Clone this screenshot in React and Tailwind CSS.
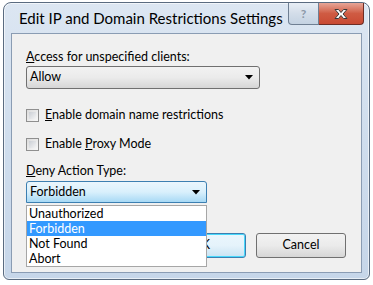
import React from "react";

const font = { fontFamily: 'Lato, "Noto Sans", sans-serif' };

function Checkbox({ children }) {
  return (
    <div className="flex items-center gap-[6px] h-[13px]">
      <div className="w-[13px] h-[13px] border border-[#8f8f8f] bg-gradient-to-br from-[#dcdcdc] to-[#f8f8f8] p-[2px]">
        <div className="w-full h-full bg-gradient-to-br from-[#cbcfd5] to-[#f4f4f4]" />
      </div>
      <span className="text-[12.5px] leading-none text-black">{children}</span>
    </div>
  );
}

function Arrow() {
  return (
    <svg width="8" height="5" viewBox="0 0 8 5" className="mr-[6px]">
      <path d="M0 0h8L4 4.5z" fill="#000" />
    </svg>
  );
}

export default function App() {
  return (
    <div className="w-[373px] h-[285px] bg-white overflow-hidden" style={font}>
      <div className="ml-[3px] mt-[2px] w-[367px] h-[278px] rounded-t-[8px] rounded-b-[6px] border border-[#5a6b80] bg-gradient-to-b from-[#dce6f2] via-[#cfdded] to-[#c6d6e9] shadow-[inset_0_0_0_1px_rgba(255,255,255,0.6)] relative">
        <div className="flex items-start h-[30px]">
          <div className="pl-[15px] pt-[5px] text-[15px] leading-[20px] text-black whitespace-nowrap">
            Edit IP and Domain Restrictions Settings
          </div>
          <div className="ml-auto mr-[5px] flex">
            <div className="w-[31px] h-[22px] border border-[#6f7f93] border-t-0 rounded-bl-[4px] bg-gradient-to-b from-[#e8eef5] via-[#d3dde9] to-[#c4d2e2] flex items-center justify-center">
              <span className="text-[12px] font-bold text-[#8b98a8] leading-none">?</span>
            </div>
            <div className="w-[45px] h-[22px] border border-[#6e2d25] border-t-0 border-l-0 rounded-br-[4px] bg-gradient-to-b from-[#e6a597] via-[#cf5b43] to-[#c94a33] flex items-center justify-center">
              <svg width="16" height="12" viewBox="0 0 16 12">
                <path d="M2 1.5h3.5L8 4.5l2.5-3H14L10 6l4 4.5h-3.5L8 7.5l-2.5 3H2L6 6z" fill="#fff" stroke="#3a3a3a" strokeWidth="1" strokeLinejoin="round" />
              </svg>
            </div>
          </div>
        </div>
        <div className="ml-[7px] w-[351px] h-[240px] border border-[#8a9cb3] bg-[#f0f0f0] relative">
          <div className="pl-[14px] pt-[15px] text-[12.5px] text-black">
            <div className="leading-[16px]">
              <span className="underline">A</span>ccess for unspecified clients:
            </div>
            <div className="mt-[1px] w-[234px] h-[23px] rounded-[3px] border border-[#707070] bg-gradient-to-b from-[#f2f2f2] via-[#ebebeb] to-[#d6d6d6] flex items-center justify-between pl-[3px]">
              <span className="leading-none">Allow</span>
              <Arrow />
            </div>
            <div className="mt-[20px]">
              <Checkbox>
                <span className="underline">E</span>nable domain name restrictions
              </Checkbox>
            </div>
            <div className="mt-[16px]">
              <Checkbox>
                Enable <span className="underline">P</span>roxy Mode
              </Checkbox>
            </div>
            <div className="mt-[12px] leading-[16px]">
              <span className="underline">D</span>eny Action Type:
            </div>
            <div className="mt-[2px] w-[181px] h-[22px] rounded-t-[3px] border border-[#3c7fb1] bg-gradient-to-b from-[#eaf6fd] via-[#d9f0fc] to-[#a7d9f5] flex items-center justify-between pl-[3px]">
              <span className="leading-none">Forbidden</span>
              <Arrow />
            </div>
          </div>
          <div className="absolute left-[244px] top-[199px] w-[90px] h-[25px] rounded-[3px] border border-[#707070] bg-gradient-to-b from-[#f2f2f2] via-[#ebebeb] to-[#d6d6d6] flex items-center justify-center text-[12.5px]">
            Cancel
          </div>
          <div className="absolute left-[144px] top-[199px] w-[90px] h-[25px] rounded-[3px] border border-[#3c7fb1] bg-gradient-to-b from-[#eaf6fd] via-[#e5f3fb] to-[#c9e3f3] shadow-[inset_0_0_0_1px_#48d8fb] flex items-center justify-center text-[12.5px]">
            OK
          </div>
          <div className="absolute left-[14px] top-[171px] w-[181px] h-[62px] border border-[#a6a6a6] bg-white text-[12.5px] text-black">
            <div className="pl-[2px] h-[15px] leading-[15px]">Unauthorized</div>
            <div className="pl-[2px] h-[15px] leading-[15px] bg-[#3399ff] text-white">Forbidden</div>
            <div className="pl-[2px] h-[15px] leading-[15px]">Not Found</div>
            <div className="pl-[2px] h-[15px] leading-[15px]">Abort</div>
          </div>
        </div>
      </div>
    </div>
  );
}
